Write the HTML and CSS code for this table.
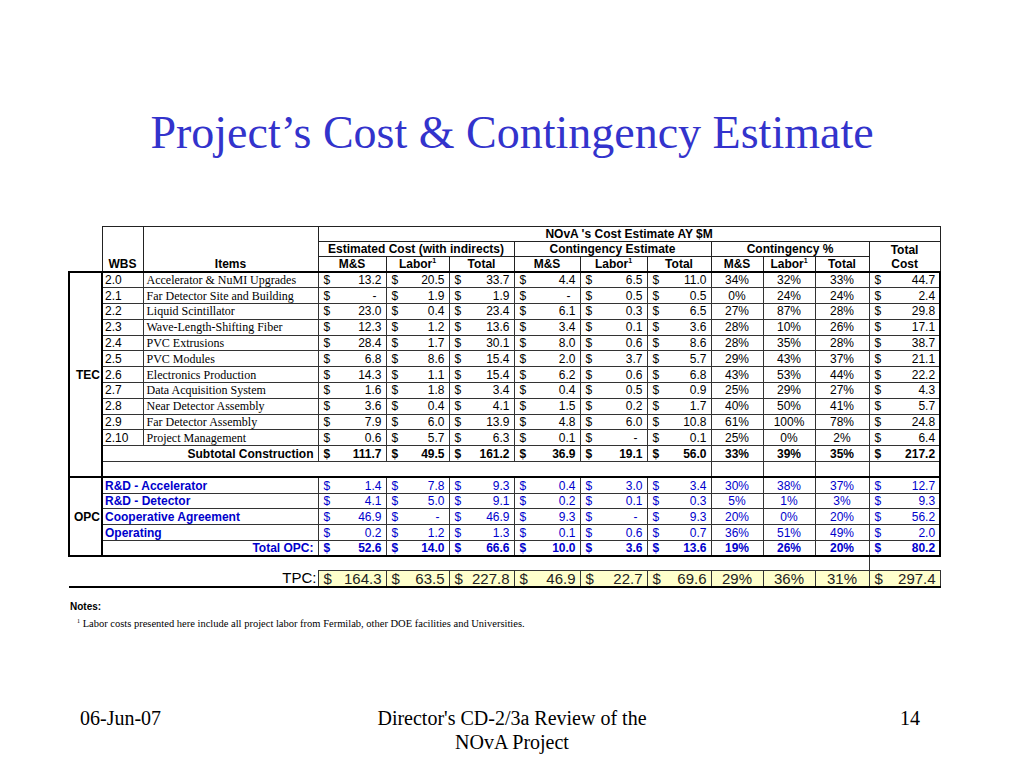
FILE: index.html
```html
<!DOCTYPE html>
<html>
<head>
<meta charset="utf-8">
<link rel="stylesheet" href="styles.css">
</head>
<body>
<h1 class="title">Project’s Cost &amp; Contingency Estimate</h1>
<div class="sheet">
<table>
<colgroup>
<col style="width:33px"><col style="width:41px"><col style="width:175px"><col style="width:68px"><col style="width:63px"><col style="width:65px"><col style="width:66px"><col style="width:67px"><col style="width:64px"><col style="width:52px"><col style="width:52px"><col style="width:54px"><col style="width:71px">
</colgroup>
<thead>
<tr><td class="nb" rowspan="3"></td><th class="hb" rowspan="3">WBS</th><th class="hb" rowspan="3">Items</th><th colspan="10">NOvA 's Cost Estimate AY $M</th></tr>
<tr><th colspan="3">Estimated Cost (with indirects)</th><th colspan="3">Contingency Estimate</th><th colspan="3">Contingency %</th><th rowspan="2" class="tcost">Total<br>Cost</th></tr>
<tr><th>M&amp;S</th><th>Labor<sup>1</sup></th><th>Total</th><th>M&amp;S</th><th>Labor<sup>1</sup></th><th>Total</th><th>M&amp;S</th><th>Labor<sup>1</sup></th><th>Total</th></tr>
</thead>
<tbody class="sec">
<tr><td class="grp" rowspan="13">TEC</td><td class="w">2.0</td><td class="it">Accelerator &amp; NuMI Upgrades</td><td class="n"><span class="d">$</span>13.2</td><td class="n"><span class="d">$</span>20.5</td><td class="n"><span class="d">$</span>33.7</td><td class="n"><span class="d">$</span>4.4</td><td class="n"><span class="d">$</span>6.5</td><td class="n"><span class="d">$</span>11.0</td><td class="p">34%</td><td class="p">32%</td><td class="p">33%</td><td class="n"><span class="d">$</span>44.7</td></tr>
<tr><td class="w">2.1</td><td class="it">Far Detector Site and Building</td><td class="n z"><span class="d">$</span>-</td><td class="n"><span class="d">$</span>1.9</td><td class="n"><span class="d">$</span>1.9</td><td class="n z"><span class="d">$</span>-</td><td class="n"><span class="d">$</span>0.5</td><td class="n"><span class="d">$</span>0.5</td><td class="p">0%</td><td class="p">24%</td><td class="p">24%</td><td class="n"><span class="d">$</span>2.4</td></tr>
<tr><td class="w">2.2</td><td class="it">Liquid Scintillator</td><td class="n"><span class="d">$</span>23.0</td><td class="n"><span class="d">$</span>0.4</td><td class="n"><span class="d">$</span>23.4</td><td class="n"><span class="d">$</span>6.1</td><td class="n"><span class="d">$</span>0.3</td><td class="n"><span class="d">$</span>6.5</td><td class="p">27%</td><td class="p">87%</td><td class="p">28%</td><td class="n"><span class="d">$</span>29.8</td></tr>
<tr><td class="w">2.3</td><td class="it">Wave-Length-Shifting Fiber</td><td class="n"><span class="d">$</span>12.3</td><td class="n"><span class="d">$</span>1.2</td><td class="n"><span class="d">$</span>13.6</td><td class="n"><span class="d">$</span>3.4</td><td class="n"><span class="d">$</span>0.1</td><td class="n"><span class="d">$</span>3.6</td><td class="p">28%</td><td class="p">10%</td><td class="p">26%</td><td class="n"><span class="d">$</span>17.1</td></tr>
<tr><td class="w">2.4</td><td class="it">PVC Extrusions</td><td class="n"><span class="d">$</span>28.4</td><td class="n"><span class="d">$</span>1.7</td><td class="n"><span class="d">$</span>30.1</td><td class="n"><span class="d">$</span>8.0</td><td class="n"><span class="d">$</span>0.6</td><td class="n"><span class="d">$</span>8.6</td><td class="p">28%</td><td class="p">35%</td><td class="p">28%</td><td class="n"><span class="d">$</span>38.7</td></tr>
<tr><td class="w">2.5</td><td class="it">PVC Modules</td><td class="n"><span class="d">$</span>6.8</td><td class="n"><span class="d">$</span>8.6</td><td class="n"><span class="d">$</span>15.4</td><td class="n"><span class="d">$</span>2.0</td><td class="n"><span class="d">$</span>3.7</td><td class="n"><span class="d">$</span>5.7</td><td class="p">29%</td><td class="p">43%</td><td class="p">37%</td><td class="n"><span class="d">$</span>21.1</td></tr>
<tr><td class="w">2.6</td><td class="it">Electronics Production</td><td class="n"><span class="d">$</span>14.3</td><td class="n"><span class="d">$</span>1.1</td><td class="n"><span class="d">$</span>15.4</td><td class="n"><span class="d">$</span>6.2</td><td class="n"><span class="d">$</span>0.6</td><td class="n"><span class="d">$</span>6.8</td><td class="p">43%</td><td class="p">53%</td><td class="p">44%</td><td class="n"><span class="d">$</span>22.2</td></tr>
<tr><td class="w">2.7</td><td class="it">Data Acquisition System</td><td class="n"><span class="d">$</span>1.6</td><td class="n"><span class="d">$</span>1.8</td><td class="n"><span class="d">$</span>3.4</td><td class="n"><span class="d">$</span>0.4</td><td class="n"><span class="d">$</span>0.5</td><td class="n"><span class="d">$</span>0.9</td><td class="p">25%</td><td class="p">29%</td><td class="p">27%</td><td class="n"><span class="d">$</span>4.3</td></tr>
<tr><td class="w">2.8</td><td class="it">Near Detector Assembly</td><td class="n"><span class="d">$</span>3.6</td><td class="n"><span class="d">$</span>0.4</td><td class="n"><span class="d">$</span>4.1</td><td class="n"><span class="d">$</span>1.5</td><td class="n"><span class="d">$</span>0.2</td><td class="n"><span class="d">$</span>1.7</td><td class="p">40%</td><td class="p">50%</td><td class="p">41%</td><td class="n"><span class="d">$</span>5.7</td></tr>
<tr><td class="w">2.9</td><td class="it">Far Detector Assembly</td><td class="n"><span class="d">$</span>7.9</td><td class="n"><span class="d">$</span>6.0</td><td class="n"><span class="d">$</span>13.9</td><td class="n"><span class="d">$</span>4.8</td><td class="n"><span class="d">$</span>6.0</td><td class="n"><span class="d">$</span>10.8</td><td class="p">61%</td><td class="p">100%</td><td class="p">78%</td><td class="n"><span class="d">$</span>24.8</td></tr>
<tr><td class="w">2.10</td><td class="it">Project Management</td><td class="n"><span class="d">$</span>0.6</td><td class="n"><span class="d">$</span>5.7</td><td class="n"><span class="d">$</span>6.3</td><td class="n"><span class="d">$</span>0.1</td><td class="n z"><span class="d">$</span>-</td><td class="n"><span class="d">$</span>0.1</td><td class="p">25%</td><td class="p">0%</td><td class="p">2%</td><td class="n"><span class="d">$</span>6.4</td></tr>
<tr class="bold"><td colspan="2" class="sub">Subtotal Construction</td><td class="n"><span class="d">$</span>111.7</td><td class="n"><span class="d">$</span>49.5</td><td class="n"><span class="d">$</span>161.2</td><td class="n"><span class="d">$</span>36.9</td><td class="n"><span class="d">$</span>19.1</td><td class="n"><span class="d">$</span>56.0</td><td class="p">33%</td><td class="p">39%</td><td class="p">35%</td><td class="n"><span class="d">$</span>217.2</td></tr>
<tr><td colspan="8" class="blank"></td><td class="p"></td><td class="p"></td><td class="p"></td><td></td></tr>
</tbody>
<tbody class="sec opc">
<tr><td class="grp" rowspan="5">OPC</td><td colspan="2" class="oi">R&amp;D - Accelerator</td><td class="n"><span class="d">$</span>1.4</td><td class="n"><span class="d">$</span>7.8</td><td class="n"><span class="d">$</span>9.3</td><td class="n"><span class="d">$</span>0.4</td><td class="n"><span class="d">$</span>3.0</td><td class="n"><span class="d">$</span>3.4</td><td class="p">30%</td><td class="p">38%</td><td class="p">37%</td><td class="n"><span class="d">$</span>12.7</td></tr>
<tr><td colspan="2" class="oi">R&amp;D - Detector</td><td class="n"><span class="d">$</span>4.1</td><td class="n"><span class="d">$</span>5.0</td><td class="n"><span class="d">$</span>9.1</td><td class="n"><span class="d">$</span>0.2</td><td class="n"><span class="d">$</span>0.1</td><td class="n"><span class="d">$</span>0.3</td><td class="p">5%</td><td class="p">1%</td><td class="p">3%</td><td class="n"><span class="d">$</span>9.3</td></tr>
<tr><td colspan="2" class="oi">Cooperative Agreement</td><td class="n"><span class="d">$</span>46.9</td><td class="n z"><span class="d">$</span>-</td><td class="n"><span class="d">$</span>46.9</td><td class="n"><span class="d">$</span>9.3</td><td class="n z"><span class="d">$</span>-</td><td class="n"><span class="d">$</span>9.3</td><td class="p">20%</td><td class="p">0%</td><td class="p">20%</td><td class="n"><span class="d">$</span>56.2</td></tr>
<tr><td colspan="2" class="oi">Operating</td><td class="n"><span class="d">$</span>0.2</td><td class="n"><span class="d">$</span>1.2</td><td class="n"><span class="d">$</span>1.3</td><td class="n"><span class="d">$</span>0.1</td><td class="n"><span class="d">$</span>0.6</td><td class="n"><span class="d">$</span>0.7</td><td class="p">36%</td><td class="p">51%</td><td class="p">49%</td><td class="n"><span class="d">$</span>2.0</td></tr>
<tr class="bold"><td colspan="2" class="oi sub">Total OPC:</td><td class="n"><span class="d">$</span>52.6</td><td class="n"><span class="d">$</span>14.0</td><td class="n"><span class="d">$</span>66.6</td><td class="n"><span class="d">$</span>10.0</td><td class="n"><span class="d">$</span>3.6</td><td class="n"><span class="d">$</span>13.6</td><td class="p">19%</td><td class="p">26%</td><td class="p">20%</td><td class="n"><span class="d">$</span>80.2</td></tr>
</tbody>
<tbody>
<tr class="gap"><td colspan="12"></td><td class="gl"></td></tr>
<tr class="tpc"><td colspan="3" class="tl">TPC:</td><td class="n y"><span class="d">$</span>164.3</td><td class="n y"><span class="d">$</span>63.5</td><td class="n y"><span class="d">$</span>227.8</td><td class="n y"><span class="d">$</span>46.9</td><td class="n y"><span class="d">$</span>22.7</td><td class="n y"><span class="d">$</span>69.6</td><td class="p y">29%</td><td class="p y">36%</td><td class="p y">31%</td><td class="n y"><span class="d">$</span>297.4</td></tr>
</tbody>
</table>
<div class="notes">
<div class="nh">Notes:</div>
<div class="fn"><sup>1</sup> Labor costs presented here include all project labor from Fermilab, other DOE facilities and Universities.</div>
</div>
</div>
<footer class="foot">
<div class="fl">06-Jun-07</div>
<div class="fc">Director's CD-2/3a Review of the<br>NOvA Project</div>
<div class="fr">14</div>
</footer>
</body>
</html>
```
FILE: styles.css
```css
* { box-sizing: border-box; }
html, body { margin: 0; padding: 0; }
body {
  width: 1024px;
  height: 768px;
  overflow: hidden;
  background: #ffffff;
  display: flex;
  flex-direction: column;
  font-family: "Liberation Sans", Arial, sans-serif;
  color: #000;
}
.title {
  margin: 0;
  padding-top: 105px;
  text-align: center;
  font-family: "Liberation Serif", "Times New Roman", serif;
  font-weight: normal;
  font-size: 46px;
  line-height: 56px;
  color: #3333cc;
}
.sheet {
  margin: 65px 0 0 68px;
}
table {
  border-collapse: collapse;
  table-layout: fixed;
  width: 872px;
  font-size: 12px;
  line-height: 14px;
}
td, th {
  padding: 0 4px;
  height: 15.8px;
  white-space: nowrap;
  overflow: hidden;
  vertical-align: middle;
}
thead th {
  border: 1px solid #222;
  height: 15px;
  font-weight: bold;
  text-align: center;
}
thead th.hb { vertical-align: bottom; padding-bottom: 0; }
thead td.nb { border: none; }
sup { font-size: 7px; line-height: 0; vertical-align: 5px; }
tbody.sec { border: 2px solid #000; }
tbody.sec td { border: 1px solid #333; }
tbody.sec td.grp {
  border: 2px solid #000;
  font-weight: bold;
  text-align: right;
  padding: 0 1px 0 0;
}
td.w { padding-left: 2px; }
td.it {
  font-family: "Liberation Serif", "Times New Roman", serif;
  padding-left: 3px;
}
td.n { text-align: right; padding-right: 4px; }
td.n.z { padding-right: 9px; }
td .d { float: left; margin-left: 1px; }
td.p { text-align: center; }
tr.bold td { font-weight: bold; }
td.sub { text-align: right; font-weight: bold; }
tbody.sec td.blank { border-left: 1px solid #333; border-right: 1px solid #333; }
tbody.opc td { color: #0000cc; }
tbody.opc td.grp { color: #000; }
td.oi { font-weight: bold; padding-left: 2px; }
tr.gap td { height: 14px; border: none; }
tr.gap td.gl { border-left: 1px solid #333; }
tr.tpc td { border-bottom: 2px solid #000; height: 17px; font-size: 15px; color: #222; }
tr.tpc td.tl { text-align: right; padding-right: 1px; color: #000; }
tr.tpc td.y { background: #ffffcc; border: 1px solid #333; border-bottom: 2px solid #000; }
.notes { margin-top: 13px; padding-left: 2px; }
.nh { font-size: 10px; font-weight: bold; line-height: 12px; }
.fn {
  font-family: "Liberation Serif", "Times New Roman", serif;
  font-size: 10.5px;
  line-height: 14px;
  margin-top: 4px;
  padding-left: 7px;
}
.fn sup { font-size: 6px; vertical-align: 4px; }
.foot {
  margin-top: auto;
  padding-bottom: 14px;
  display: grid;
  grid-template-columns: 1fr 360px 1fr;
  font-family: "Liberation Serif", "Times New Roman", serif;
  font-size: 20px;
  line-height: 24px;
}
.fl { padding-left: 80px; }
.fc { text-align: center; }
.fr { text-align: right; padding-right: 104px; }
```
